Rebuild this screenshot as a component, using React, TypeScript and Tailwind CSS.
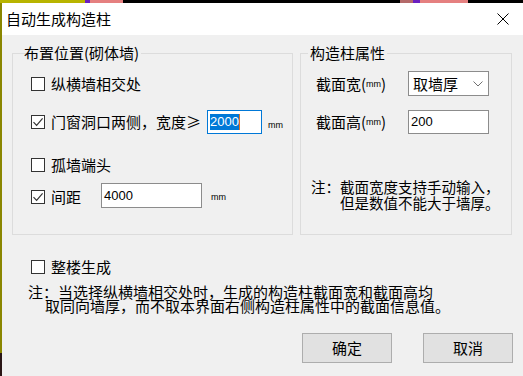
import type { ReactNode } from "react";

const Check = ({ checked = false }: { checked?: boolean }) => (
  <span className="flex h-[14px] w-[14px] shrink-0 items-center justify-center border border-[#333333] bg-white">
    {checked && (
      <svg width="12" height="12" viewBox="0 0 12 12" fill="none">
        <path d="M1.5 6.2 L4.6 9.3 L10.6 2.4" stroke="#333333" strokeWidth="1.2" />
      </svg>
    )}
  </span>
);

const Mm = () => (
  <span className="font-['Liberation_Sans',sans-serif] text-[9px] leading-[10px]">mm</span>
);

const GroupTitle = ({ children, offset }: { children: ReactNode; offset: string }) => (
  <div className={`-mt-[10px] w-fit bg-[#f0f0f0] px-[2px] leading-[18px] ${offset}`}>{children}</div>
);

const NumberBox = ({ value, width, height }: { value: string; width: string; height: string }) => (
  <div
    className={`flex items-center border border-[#8c8c8c] bg-white pl-[2px] font-['Liberation_Sans',sans-serif] text-[13px] leading-[16px] ${width} ${height}`}
  >
    {value}
  </div>
);

export default function App() {
  return (
    <div className="flex h-[376px] w-[523px] flex-col overflow-hidden bg-black font-['Noto_Sans_CJK_SC',sans-serif] text-[15px] text-black">
      <div className="flex h-[3px] shrink-0">
        <div className="w-[85px] bg-[#b8b400]" />
        <div className="w-[5px] bg-[#6a1fc0]" />
        <div className="w-[33px] bg-[#e58080]" />
        <div className="w-[277px] bg-black" />
        <div className="w-[13px] bg-[#b46a6a]" />
        <div className="w-[7px] bg-[#6a1fc0]" />
        <div className="w-[48px] bg-[#e58080]" />
        <div className="flex-1 bg-black" />
      </div>

      <div className="flex flex-1">
        <div className="flex w-[2px] flex-col">
          <div className="h-[350px] bg-[#8a8600]" />
          <div className="flex-1 bg-[#2a1616]" />
        </div>

        <div className="flex flex-1 flex-col bg-[#f0f0f0]">
          <div className="flex h-[32px] items-center justify-between bg-white pl-[4px] pr-[14px]">
            <span className="leading-[18px]">自动生成构造柱</span>
            <svg width="12" height="12" viewBox="0 0 12 12" fill="none">
              <path d="M0.5 0.5 L11.5 11.5 M11.5 0.5 L0.5 11.5" stroke="#000000" strokeWidth="1" />
            </svg>
          </div>

          <div className="flex flex-col pt-[18px]">
            <div className="flex gap-[7px] pl-[10px]">
              <div className="flex h-[182px] w-[281px] flex-col border border-[#dcdcdc] pl-[18px]">
                <GroupTitle offset="ml-[5px] -ml-[0px]">
                  <span className="-ml-[14px] block">布置位置(砌体墙)</span>
                </GroupTitle>

                <div className="mt-[10px] flex h-[24px] items-center gap-[6px]">
                  <Check />
                  <span className="leading-[18px]">纵横墙相交处</span>
                </div>

                <div className="mt-[14px] flex h-[24px] items-center">
                  <Check checked />
                  <span className="ml-[6px] w-[156px] whitespace-nowrap leading-[18px]">门窗洞口两侧，宽度≥</span>
                  <div className="flex h-[24px] w-[55px] items-center border border-[#0078d7] bg-white pl-[2px] font-['Liberation_Sans',sans-serif] text-[13px]">
                    <span className="bg-[#0078d7] leading-[16px] text-white">2000</span>
                    <span className="h-[16px] w-px bg-[#e07020]" />
                  </div>
                  <span className="ml-[6px]">
                    <Mm />
                  </span>
                </div>

                <div className="mt-[19px] flex h-[24px] items-center gap-[6px]">
                  <Check />
                  <span className="leading-[18px]">孤墙端头</span>
                </div>

                <div className="mt-[6px] flex h-[25px] items-center">
                  <span className="mt-[3px]">
                    <Check checked />
                  </span>
                  <span className="ml-[6px] mt-[3px] w-[50px] leading-[18px]">间距</span>
                  <NumberBox value="4000" width="w-[101px]" height="h-[25px]" />
                  <span className="-mt-[3px] ml-[9px]">
                    <Mm />
                  </span>
                </div>
              </div>

              <div className="flex h-[182px] w-[212px] flex-col border border-[#dcdcdc]">
                <GroupTitle offset="ml-[7px]">构造柱属性</GroupTitle>

                <div className="mt-[9px] flex h-[25px] items-center pl-[15px]">
                  <span className="flex w-[92px] items-center whitespace-nowrap leading-[18px]">
                    截面宽(<Mm />)
                  </span>
                  <div className="flex h-[25px] w-[81px] items-center justify-between border border-[#8c8c8c] bg-white pl-[4px] pr-[5px]">
                    <span className="leading-[18px]">取墙厚</span>
                    <svg width="10" height="6" viewBox="0 0 10 6" fill="none">
                      <path d="M0.5 0.5 L5 5 L9.5 0.5" stroke="#707070" strokeWidth="1" />
                    </svg>
                  </div>
                </div>

                <div className="mt-[14px] flex h-[24px] items-center pl-[15px]">
                  <span className="flex w-[92px] items-center whitespace-nowrap leading-[18px]">
                    截面高(<Mm />)
                  </span>
                  <NumberBox value="200" width="w-[81px]" height="h-[24px]" />
                </div>

                <div className="mt-[45px] flex pl-[10px] text-[14.5px] leading-[16px]">
                  <span className="whitespace-nowrap">注：</span>
                  <div className="flex flex-col whitespace-nowrap">
                    <span>截面宽度支持手动输入，</span>
                    <span>但是数值不能大于墙厚。</span>
                  </div>
                </div>
              </div>
            </div>

            <div className="mt-[20px] flex h-[24px] items-center gap-[6px] pl-[29px]">
              <Check />
              <span className="leading-[18px]">整楼生成</span>
            </div>

            <div className="mt-[6px] flex flex-col whitespace-nowrap pl-[26px] leading-[14px]">
              <span>注：当选择纵横墙相交处时，生成的构造柱截面宽和截面高均</span>
              <span className="pl-[17px]">取同向墙厚，而不取本界面右侧构造柱属性中的截面信息值。</span>
            </div>

            <div className="mt-[20px] flex justify-end gap-[31px] pr-[10px]">
              <button
                type="button"
                className="flex h-[30px] w-[90px] items-center justify-center border border-[#adadad] bg-[#e1e1e1] leading-[18px]"
              >
                确定
              </button>
              <button
                type="button"
                className="flex h-[30px] w-[90px] items-center justify-center border border-[#adadad] bg-[#e1e1e1] leading-[18px]"
              >
                取消
              </button>
            </div>
          </div>
        </div>
      </div>
    </div>
  );
}
